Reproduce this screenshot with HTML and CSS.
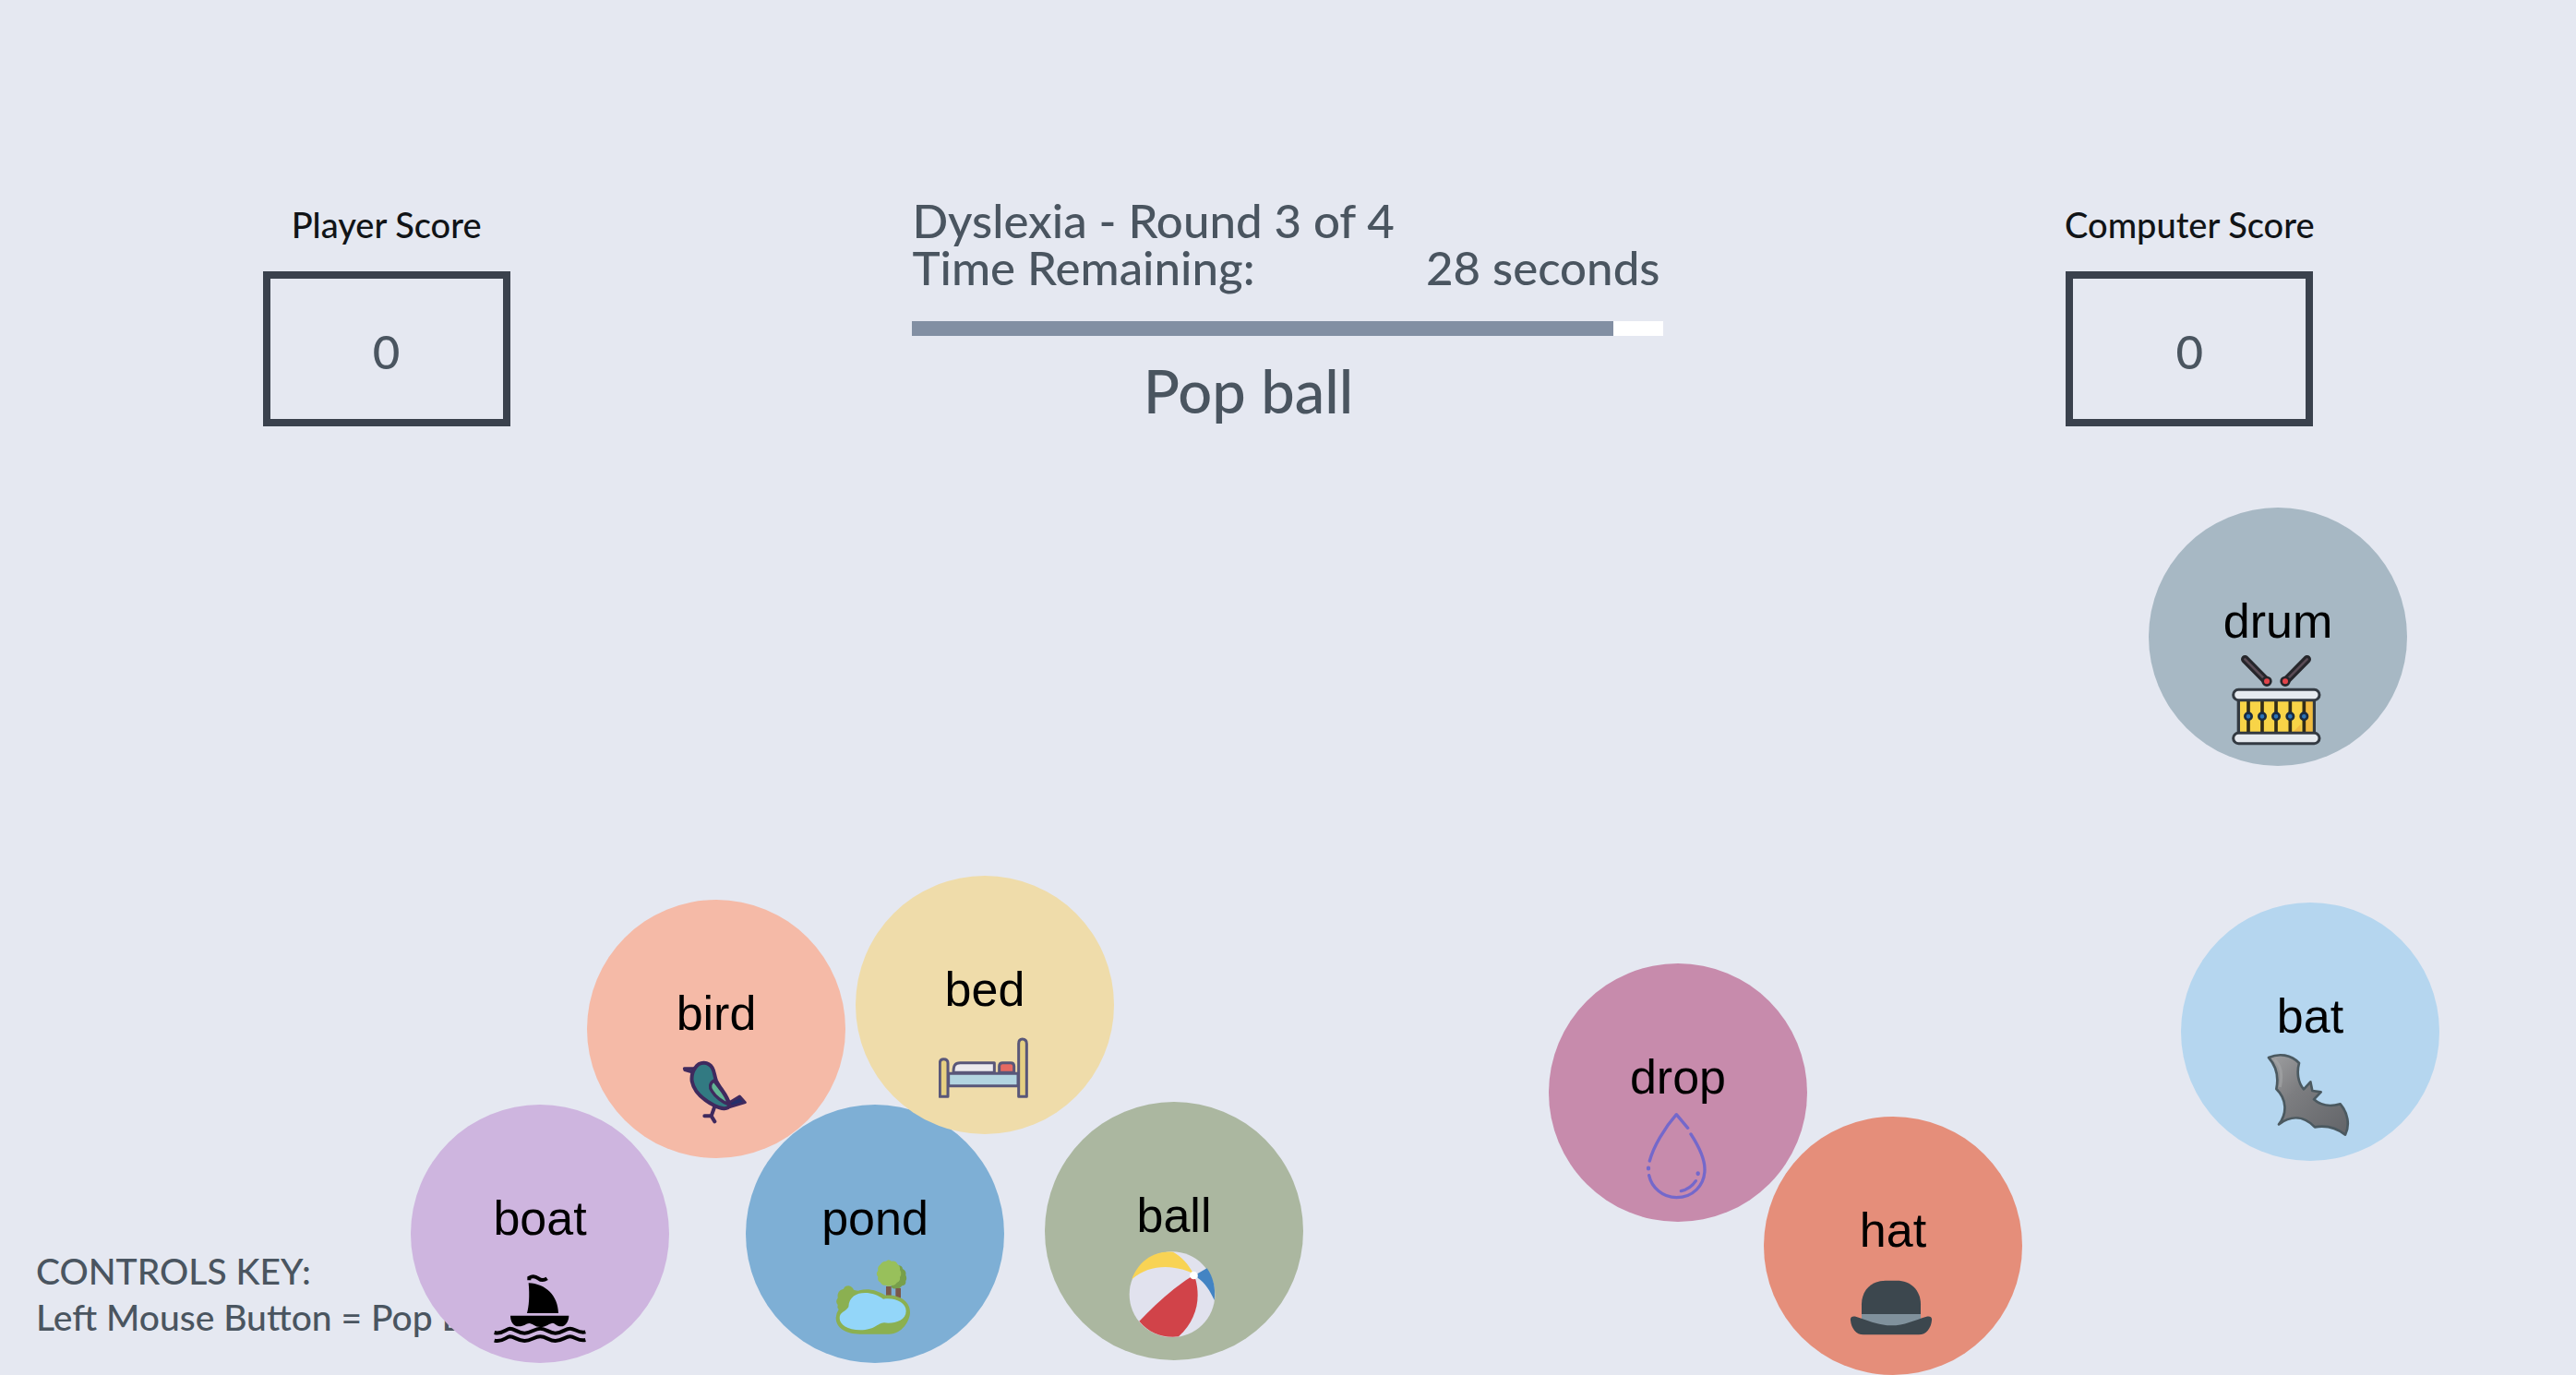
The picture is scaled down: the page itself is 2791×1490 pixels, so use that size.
FILE: index.html
```html
<!DOCTYPE html>
<html lang="en">
<head>
<meta charset="utf-8">
<meta name="viewport" content="width=device-width, initial-scale=1">
<title>Dyslexia - Round 3 of 4</title>
<link rel="stylesheet" href="styles.css">
</head>
<body>
<main class="game">
  <header class="scoreboard">
    <section class="score">
      <h2 class="score-label">Player Score</h2>
      <div class="score-box">0</div>
    </section>
    <section class="round">
      <h1 class="round-line">Dyslexia - Round 3 of 4</h1>
      <div class="round-line round-timer"><label for="time">Time Remaining:</label><span>28 seconds</span></div>
      <progress class="time-bar" id="time" value="28" max="30"></progress>
      <p class="target">Pop ball</p>
    </section>
    <section class="score">
      <h2 class="score-label">Computer Score</h2>
      <div class="score-box">0</div>
    </section>
  </header>

  <footer class="controls">
    <p>CONTROLS KEY:</p>
    <p>Left Mouse Button = Pop Bubble</p>
  </footer>

  <button class="bubble drum" type="button">
    <span>drum</span>
    <svg class="icon" viewBox="354 540 300 300" aria-hidden="true">
      <g stroke-linecap="round">
        <path d="M397 553L468 625M599 553L528 625" stroke="#26262b" stroke-width="26"/>
        <path d="M397 553L460 617M599 553L536 617" stroke="#5a4b55" stroke-width="8"/>
      </g>
      <g fill="#e2444a" stroke="#26262b" stroke-width="8"><circle cx="468" cy="625" r="13"/><circle cx="528" cy="625" r="13"/></g>
      <path d="M376 680H622V798H376Z" fill="#f8d447" stroke="#333a42" stroke-width="10"/>
      <path d="M594 685H616V793H594ZM550 793L578 765V793Z" fill="#f2bb40"/>
      <path d="M408 685V793M453 685V793M498 685V793M544 685V793M589 685V793" stroke="#332d17" stroke-width="11"/>
      <g fill="#2b74b8" stroke="#192c40" stroke-width="8"><circle cx="408" cy="739" r="11"/><circle cx="453" cy="739" r="11"/><circle cx="498" cy="739" r="11"/><circle cx="544" cy="739" r="11"/><circle cx="589" cy="739" r="11"/></g>
      <g fill="#e6eaef" stroke="#333a42" stroke-width="9"><rect x="359" y="652" width="280" height="34" rx="17"/><rect x="359" y="793" width="280" height="34" rx="17"/></g>
    </svg>
  </button>

  <button class="bubble bird" type="button">
    <span>bird</span>
    <svg class="icon" viewBox="318 524 300 300" aria-hidden="true">
      <path d="M463 716L452 747H430M452 747L463 765" fill="none" stroke="#3f2a5e" stroke-width="12" stroke-linecap="round" stroke-linejoin="round"/>
      <path d="M506 706L544 683L562 703L512 718Z" fill="#24306b" stroke="#3f2a5e" stroke-width="9" stroke-linejoin="round"/>
      <path d="M400 592H364L366 598L394 606Z" fill="#3b3a70" stroke="#3f2a5e" stroke-width="9" stroke-linejoin="round"/>
      <path d="M400 590C414 568 443 570 455 590C463 603 462 617 468 632C480 658 505 680 512 712C506 728 484 724 462 713C428 696 396 670 389 634C387 616 391 602 400 590Z" fill="#327a82" stroke="#3f2a5e" stroke-width="12"/>
      <path d="M461 632C447 640 445 654 454 666C465 684 488 702 508 709C502 677 477 655 461 632Z" fill="#62b594" stroke="#3f2a5e" stroke-width="10" stroke-linejoin="round"/>
    </svg>
  </button>

  <button class="bubble boat" type="button">
    <span>boat</span>
    <svg class="icon" viewBox="6 528 300 300" aria-hidden="true">
      <path d="M119 628C175 630 215 670 216 726H114C120 705 123 670 119 628Z"/>
      <path d="M60 734H250C250 752 240 769 224 769C210 769 204 758 198 758C188 758 176 771 157 771C140 771 132 759 121 759C112 759 105 769 87 769C68 769 60 752 60 734Z"/>
      <g fill="none" stroke="#000" stroke-width="12">
        <path d="M121 619V611C133 603 143 607 151 613C160 620 169 620 179 613"/>
        <path d="M8 789C34 796 44 778 58 776C74 776 84 791 106 791C128 791 138 776 157 776C176 776 186 791 206 791C228 791 238 776 254 776C270 776 282 793 304 787"/>
        <path d="M8 815C34 822 44 804 58 802C74 802 84 816 106 816C128 816 138 802 157 802C176 802 186 816 206 816C228 816 238 802 254 802C270 802 282 819 304 813"/>
      </g>
    </svg>
  </button>

  <button class="bubble pond" type="button">
    <span>pond</span>
    <svg class="icon" viewBox="324 531 300 300" aria-hidden="true">
      <path d="M549 574Q562 573 564 585Q577 592 574 605Q579 616 574 624Q576 638 562 640Q554 652 543 648Q532 653 526 642Z" fill="#779f4b"/>
      <path d="M510 642H527V672H510ZM541 648H558V680H541Z" fill="#7b5849"/>
      <path d="M510 560Q518 551 528 560Q542 558 547 569Q557 576 555 588Q563 601 555 612Q557 625 545 630Q538 642 527 638Q518 645 509 638Q497 640 492 629Q481 624 484 611Q475 601 484 590Q481 578 492 571Q497 560 510 560Z" fill="#98c05b"/>
      <path d="M372 650Q376 640 388 640Q400 642 405 653Q420 658 424 655C450 648 475 652 508 671C555 668 589 692 588 727C587 755 562 797 520 797H425C380 797 347 777 347 744Q347 730 356 717Q350 710 353 702Q344 690 353 680Q349 655 372 650Z" fill="#8bb051"/>
      <path d="M388 709C390 650 467 655 501 683C541 677 575 696 575 722C575 755 533 764 504 760C480 762 475 784 426 784C385 784 359 767 359 745C359 725 378 725 388 709Z" fill="#93d6f9"/>
    </svg>
  </button>

  <button class="bubble bed" type="button">
    <span>bed</span>
    <svg class="icon" viewBox="322 537 300 300" aria-hidden="true">
      <g stroke="#595779" stroke-width="9" stroke-linejoin="round">
        <path d="M354 700H580V740H354Z" fill="#b3d5e1"/>
        <path d="M370 697C370 675 374 665 392 665H503V697Z" fill="#edebee"/>
        <path d="M519 697V676Q519 665 530 665H556Q567 665 567 676V697Z" fill="#e66a62"/>
        <path d="M326 775V666Q326 653 338 653Q352 653 352 666V775ZM582 775V603Q582 588 594 588Q608 588 608 603V775Z" fill="#e6d082"/>
      </g>
    </svg>
  </button>

  <button class="bubble ball" type="button">
    <span>ball</span>
    <svg class="icon" viewBox="336 520 300 300" aria-hidden="true">
      <circle cx="480" cy="666" r="139" fill="#e1e2ee"/>
      <path d="M349 617C369 559 421 522 483 528C510 543 532 566 549 598C488 570 408 565 349 617Z" fill="#f8d354"/>
      <path d="M562 599L593 581C614 610 622 647 617 685C603 653 588 630 563 612Z" fill="#4384c3"/>
      <path d="M373 753C420 703 480 647 541 609L556 617C573 681 560 748 501 803C452 808 408 795 373 753Z" fill="#d14349"/>
      <circle cx="550" cy="604" r="13" fill="#fff"/>
    </svg>
  </button>

  <button class="bubble drop" type="button">
    <span>drop</span>
    <svg class="icon" viewBox="324 521 300 300" aria-hidden="true">
      <g fill="none" stroke="#7468cb" stroke-width="10" stroke-linecap="round" stroke-linejoin="round">
        <path d="M382 683C394 637 430 576 469 532L506 576M516 596C542 636 561 678 561 710C561 764 521 802 469 802C424 802 388 769 380 730M484 781C507 776 522 763 532 748"/>
        <path d="M378 706V708M539 723V725" stroke-width="13"/>
      </g>
    </svg>
  </button>

  <button class="bubble hat" type="button">
    <span>hat</span>
    <svg class="icon" viewBox="334 540 300 300" aria-hidden="true">
      <path d="M382 702V670C382 624 415 593 460 593H496C541 593 574 624 574 670V702Z" fill="#3c474e"/>
      <path d="M382 702H574V730L478 748L382 730Z" fill="#80919c"/>
      <path d="M346 722C344 712 352 707 363 710C403 722 435 739 478 739C521 739 553 722 593 710C604 707 612 712 610 722C608 747 592 769 568 769H388C364 769 348 747 346 722Z" fill="#3c474e"/>
    </svg>
  </button>

  <button class="bubble bat" type="button">
    <span>bat</span>
    <svg class="icon" viewBox="338 535 300 300" aria-hidden="true">
      <defs>
        <linearGradient id="bat-fur" x1="0" y1="0" x2="1" y2="1"><stop offset="0" stop-color="#a0a0a2"/><stop offset=".4" stop-color="#7c7d80"/><stop offset="1" stop-color="#626468"/></linearGradient>
      </defs>
      <path d="M353 559C387 544 426 549 452 577C444 607 448 640 467 662L489 638L495 667L523 671L500 695C522 715 555 719 586 710C610 739 618 777 602 810C573 787 539 779 503 785C470 751 429 744 386 776C414 741 412 694 378 661C386 622 379 588 353 559Z" fill="url(#bat-fur)" stroke="#4b5960" stroke-width="8" stroke-linejoin="round"/>
      <path d="M372 566C396 586 397 622 390 655" fill="none" stroke="#a5a6a8" stroke-width="9" opacity=".6"/>
    </svg>
  </button>
</main>
</body>
</html>
```
FILE: styles.css
```css
* {
  box-sizing: border-box;
}

body {
  margin: 0;
  background: #e5e8f1;
  color: #4a5560;
  font-family: Lato, "Open Sans", sans-serif;
  font-weight: 500;
}

h1,
h2,
p {
  margin: 0;
  font-weight: 500;
}

.game {
  position: relative;
  display: flex;
  flex-direction: column;
  min-height: 100vh;
  overflow: hidden;
}

.scoreboard {
  display: grid;
  grid-template-columns: 3fr 4fr 3fr;
  align-items: start;
  padding-top: 213px;
}

.score {
  display: flex;
  flex-direction: column;
  align-items: center;
  gap: 26px;
  padding-top: 5px;
}

.score-label {
  color: #111417;
  font-size: 38px;
  line-height: 50px;
}

.score-box {
  display: flex;
  align-items: center;
  justify-content: center;
  width: 268px;
  height: 168px;
  padding-top: 4px;
  border: 8px solid #3a414d;
  font-size: 51px;
}

.round {
  display: flex;
  flex-direction: column;
  justify-self: center;
  width: 100%;
  max-width: 814px;
}

.round-line {
  font-size: 51px;
  line-height: 52px;
}

.round-line + .round-line {
  line-height: 50px;
}

.round-timer {
  display: flex;
  justify-content: space-between;
  padding-right: 4px;
}

.time-bar {
  display: block;
  width: 100%;
  height: 16px;
  margin: 33px 0 18px;
  border: 0;
  background: #fff;
  appearance: none;
}

.time-bar::-webkit-progress-bar {
  background: #fff;
}

.time-bar::-webkit-progress-value {
  background: #828fa3;
}

.target {
  padding-right: 86px;
  font-size: 65px;
  line-height: 82px;
  text-align: center;
}

.controls {
  margin-top: auto;
  padding: 0 39px 38px;
  font-size: 39px;
  line-height: 50px;
}

.bubble {
  position: absolute;
  display: flex;
  flex-direction: column;
  align-items: center;
  gap: 7px;
  width: 280px;
  height: 280px;
  padding: 93px 0 0;
  border: 0;
  border-radius: 50%;
  color: #000;
  font-family: "Liberation Sans", Arial, sans-serif;
  font-size: 52px;
  line-height: 60px;
  cursor: pointer;
}

.icon {
  width: 100px;
  height: 100px;
}

.drum {
  left: 2328px;
  top: 550px;
  background: #a7b8c4;
}

.bird {
  left: 636px;
  top: 975px;
  background: #f5baa7;
}

.boat {
  left: 445px;
  top: 1197px;
  background: #ceb5df;
}

.pond {
  left: 808px;
  top: 1197px;
  background: #7eafd5;
}

.bed {
  left: 927px;
  top: 949px;
  background: #efdcaa;
}

.ball {
  left: 1132px;
  top: 1194px;
  background: #abb7a0;
}

.drop {
  left: 1678px;
  top: 1044px;
  background: #c78bac;
}

.hat {
  left: 1911px;
  top: 1210px;
  background: #e58e7a;
}

.bat {
  left: 2363px;
  top: 978px;
  background: #b5d6ef;
}
```
